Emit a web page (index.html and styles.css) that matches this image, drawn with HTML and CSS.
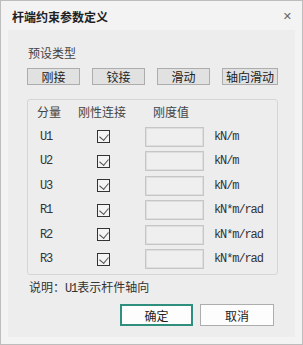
FILE: index.html
```html
<!DOCTYPE html>
<html lang="zh">
<head>
    <meta charset="UTF-8">
    <title>杆端约束参数定义</title>
    <link rel="stylesheet" href="styles.css">
</head>
<body>
    <div class="window">
        <div class="titlebar">
            <span class="title">杆端约束参数定义</span>
            <span class="close">✕</span>
        </div>

        <div class="panel">
            <div class="section-label">预设类型</div>
            <div class="preset-row">
                <button class="btn">刚接</button>
                <button class="btn">铰接</button>
                <button class="btn">滑动</button>
                <button class="btn btn-wide">轴向滑动</button>
            </div>

            <div class="group">
                <div class="head">分量</div>
                <div class="head">刚性连接</div>
                <div class="head head-value">刚度值</div>
                <div></div>

                <div class="dof">U1</div>
                <div class="check-cell"><span class="check"></span></div>
                <div class="field"></div>
                <div class="unit">kN/m</div>

                <div class="dof">U2</div>
                <div class="check-cell"><span class="check"></span></div>
                <div class="field"></div>
                <div class="unit">kN/m</div>

                <div class="dof">U3</div>
                <div class="check-cell"><span class="check"></span></div>
                <div class="field"></div>
                <div class="unit">kN/m</div>

                <div class="dof">R1</div>
                <div class="check-cell"><span class="check"></span></div>
                <div class="field"></div>
                <div class="unit">kN*m/rad</div>

                <div class="dof">R2</div>
                <div class="check-cell"><span class="check"></span></div>
                <div class="field"></div>
                <div class="unit">kN*m/rad</div>

                <div class="dof">R3</div>
                <div class="check-cell"><span class="check"></span></div>
                <div class="field"></div>
                <div class="unit">kN*m/rad</div>
            </div>

            <div class="note">说明：<span class="mono">U1</span>表示杆件轴向</div>

            <div class="actions">
                <button class="btn-dlg btn-ok">确定</button>
                <button class="btn-dlg">取消</button>
            </div>
        </div>
    </div>
</body>
</html>
```

FILE: styles.css
```css
* {
    box-sizing: border-box;
}
body {
    margin: 0;
    font-family: "Noto Sans CJK SC", "Noto Sans", sans-serif;
    font-size: 12px;
    color: #333;
}
.window {
    width: 303px;
    height: 345px;
    border: 1px solid #bdbdbd;
    background: #f3f3f3;
    display: flex;
    flex-direction: column;
}
.titlebar {
    height: 29px;
    display: flex;
    align-items: center;
    justify-content: space-between;
    padding: 1px 10px 0 11px;
}
.title {
    font-size: 12px;
    font-weight: 600;
    color: #222;
}
.close {
    font-family: "DejaVu Sans", sans-serif;
    font-size: 11px;
    color: #666;
}
.panel {
    flex: 1;
    margin: 0 7px 7px 7px;
    background: #ededed;
    padding: 15px 17px 0 19px;
}
.section-label {
    line-height: 16px;
    padding-left: 1px;
    color: #444;
}
.preset-row {
    display: flex;
    justify-content: space-between;
    margin-top: 7px;
}
.btn {
    width: 53px;
    height: 17px;
    padding: 0;
    border: 1px solid #adadad;
    background: #e1e1e1;
    font-family: inherit;
    font-size: 12px;
    line-height: 15px;
    color: #222;
}
.btn-wide {
    width: 56px;
}
.group {
    margin-top: 14px;
    border: 1px solid #d6d6d6;
    border-radius: 3px;
    padding: 2px 0 5px 9px;
    display: grid;
    grid-template-columns: 41px 67px 59px auto;
    grid-auto-rows: 20px;
    row-gap: 4.5px;
    align-items: center;
}
.head {
    color: #444;
    line-height: 16px;
}
.head-value {
    padding-left: 8px;
}
.dof,
.unit,
.mono {
    font-family: "Liberation Mono", monospace;
    font-size: 12px;
    letter-spacing: -1.1px;
    color: #333;
}
.dof {
    padding-left: 3px;
}
.check-cell {
    padding-left: 19px;
    display: flex;
    align-items: center;
}
.check {
    width: 13px;
    height: 13px;
    border: 1px solid #333;
    background: #f4f4f4;
    position: relative;
}
.check::after {
    content: "";
    position: absolute;
    left: 3px;
    top: 1px;
    width: 5px;
    height: 7px;
    border-right: 1px solid #555;
    border-bottom: 1px solid #555;
    transform: rotate(40deg);
}
.field {
    height: 20px;
    border: 1px solid #c6c6c6;
    box-shadow: inset 0 0 0 1px #dedede;
    background: #efefef;
}
.unit {
    padding-left: 10px;
}
.note {
    margin-top: 4px;
    padding-left: 2px;
    line-height: 16px;
    color: #333;
}
.actions {
    margin-top: 7px;
    padding-right: 4px;
    display: flex;
    justify-content: flex-end;
    gap: 7px;
}
.btn-dlg {
    width: 74px;
    height: 22px;
    padding: 0;
    border: 1px solid #adadad;
    background: #fdfdfd;
    font-family: inherit;
    font-size: 12px;
    color: #222;
}
.btn-ok {
    width: 73px;
    border: 2px solid #2f8f7e;
}
```
